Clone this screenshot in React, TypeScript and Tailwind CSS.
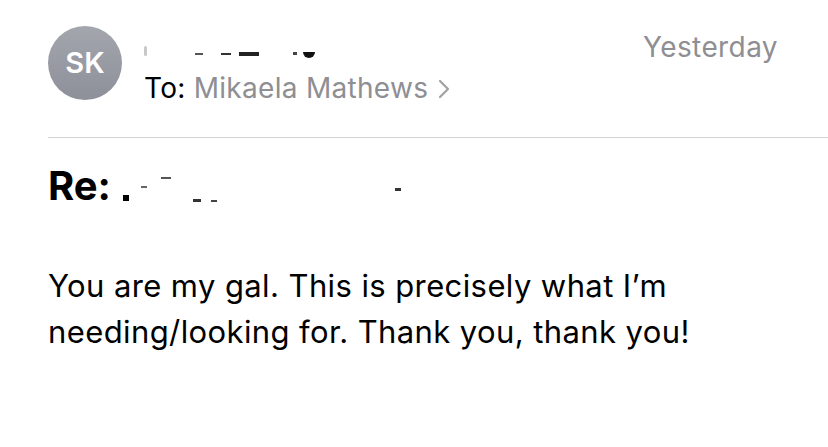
export default function App() {
	const font = { fontFamily: "Inter, 'Liberation Sans', sans-serif" };

	return (
		<div className="w-[828px] h-[447px] bg-white overflow-hidden text-black" style={font}>
			<div className="flex items-start pl-[48px] pr-[50px] pt-[26px]">
				<div className="w-[74px] h-[74px] rounded-full bg-gradient-to-b from-[#a4a6ae] to-[#8e9099] flex items-center justify-center shrink-0">
					<span className="text-white text-[29px] font-semibold">SK</span>
				</div>
				<div className="ml-[22px] flex-1">
					{/* redacted sender name, only scraps left */}
					<div className="h-[46px] flex items-end pb-[14px]">
						<span className="inline-block w-[3px] h-[10px] bg-[#c8c8c8] rounded-full mb-[2px]" />
						<span className="inline-block w-[8px] h-[2px] bg-[#555] ml-[48px] mb-[3px]" />
						<span className="inline-block w-[10px] h-[2px] bg-[#333] ml-[18px] mb-[3px]" />
						<span className="inline-block w-[20px] h-[4px] bg-[#222] ml-[8px] mb-[2px]" />
						<span className="inline-block w-[4px] h-[3px] bg-[#444] ml-[34px] mb-[3px]" />
						<span className="inline-block w-[12px] h-[6px] bg-[#111] ml-[6px] rounded-b-full" />
					</div>
					<div className="flex items-center text-[28px] leading-[32px] tracking-[0.3px]">
						<span className="text-black">To:</span>
						<span className="text-[#8e8e93] ml-[8px]">Mikaela Mathews</span>
						<svg className="ml-[10px] mt-[2px]" width="12" height="20" viewBox="0 0 12 20" fill="none">
							<path d="M2 2l8 8-8 8" stroke="#a1a1a6" strokeWidth="2.2" strokeLinecap="round" strokeLinejoin="round" />
						</svg>
					</div>
				</div>
				<div className="text-[28px] leading-[32px] tracking-[0.4px] text-[#8e8e93] mt-[5px]">Yesterday</div>
			</div>

			<div className="ml-[48px] mt-[33px] h-px bg-[#d1d1d6]" />

			{/* subject, mostly redacted */}
			<div className="pl-[48px] mt-[24px] flex items-end h-[48px]">
				<span className="text-[40px] leading-[48px] font-bold">Re:</span>
				<span className="inline-block w-[6px] h-[6px] bg-black ml-[12px] mb-[9px]" />
				<span className="inline-block w-[6px] h-[2px] bg-[#666] ml-[12px] mb-[22px]" />
				<span className="inline-block w-[10px] h-[2px] bg-[#555] ml-[14px] mb-[31px]" />
				<span className="inline-block w-[8px] h-[3px] bg-[#333] ml-[22px] mb-[8px]" />
				<span className="inline-block w-[6px] h-[2px] bg-[#444] ml-[10px] mb-[8px]" />
				<span className="inline-block w-[6px] h-[3px] bg-[#333] ml-[178px] mb-[19px]" />
			</div>

			<div className="pl-[48px] pr-[40px] mt-[53px] text-[31px] leading-[46px] tracking-[0.4px]">
				You are my gal. This is precisely what I’m needing/looking for. Thank you, thank you!
			</div>
		</div>
	);
}
